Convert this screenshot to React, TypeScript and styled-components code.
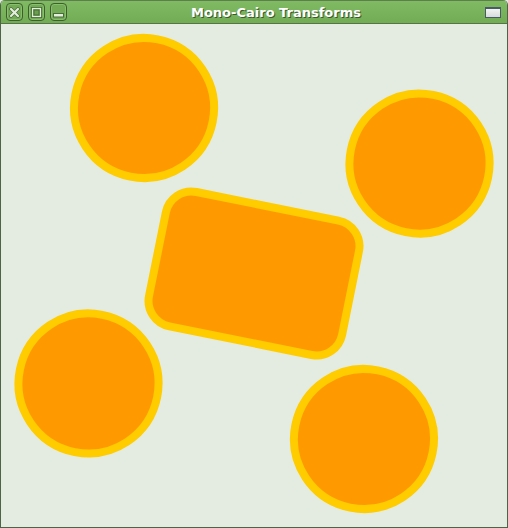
import React from 'react'
import styled, { createGlobalStyle } from 'styled-components'

const GlobalStyle = createGlobalStyle`
    html, body {
        margin: 0;
        padding: 0;
        background: #e4ece2;
    }
`

const CX = 253
const CY = 249.5
const D = 140.5
const ANGLE = 11.4

const circles = [
    { x: -D, y: -D },
    { x: D, y: -D },
    { x: -D, y: D },
    { x: D, y: D },
]

const CloseIcon = () => (
    <svg width="11" height="11" viewBox="0 0 11 11">
        <path d="M2 2 L9 9 M9 2 L2 9" stroke="#4a6b3a" strokeWidth="3.6" strokeLinecap="round" />
        <path d="M2 2 L9 9 M9 2 L2 9" stroke="#e4eedd" strokeWidth="2.2" strokeLinecap="round" />
    </svg>
)

const MaxIcon = () => (
    <svg width="11" height="11" viewBox="0 0 11 11">
        <rect x="0.5" y="0.5" width="10" height="10" fill="none" stroke="#4a6b3a" strokeWidth="1" />
        <rect x="1.5" y="1.5" width="8" height="8" fill="none" stroke="#e4eedd" strokeWidth="1.2" />
        <rect x="3" y="3" width="5" height="5" fill="#6aa04d" stroke="#4a6b3a" strokeWidth="1" />
    </svg>
)

const MinIcon = () => (
    <svg width="11" height="11" viewBox="0 0 11 11">
        <rect x="0.5" y="6.5" width="10" height="3.5" fill="#e4eedd" stroke="#4a6b3a" strokeWidth="1" />
    </svg>
)

const App: React.FunctionComponent = () => (
    <>
        <GlobalStyle />
        <Window>
            <TitleBar>
                <Buttons>
                    <TitleButton><CloseIcon /></TitleButton>
                    <TitleButton><MaxIcon /></TitleButton>
                    <TitleButton><MinIcon /></TitleButton>
                </Buttons>
                <Title>Mono-Cairo Transforms</Title>
                <ShadeBox />
            </TitleBar>
            <Client>
                <svg width="506" height="504" viewBox="0 0 506 504">
                    <g transform={`translate(${CX} ${CY}) rotate(${ANGLE})`}>
                        {circles.map((c, i) => (
                            <circle key={i} cx={c.x} cy={c.y} r="70" fill="#ff9900" stroke="#ffcc00" strokeWidth="8" />
                        ))}
                        <rect x={-98.5} y={-68.5} width="197" height="137" rx="26" ry="26" fill="#ff9900" stroke="#ffcc00" strokeWidth="8" />
                    </g>
                </svg>
            </Client>
        </Window>
    </>
)

export default App

const Window = styled.div`
    width: 508px;
    height: 528px;
    box-sizing: border-box;
    border: 1px solid #4e6446;
    border-top: none;
    border-radius: 5px 5px 0 0;
    display: flex;
    flex-direction: column;
    overflow: hidden;
    background: #e4ece2;
`

const TitleBar = styled.div`
    height: 22px;
    flex-shrink: 0;
    display: flex;
    align-items: center;
    padding: 0 6px 0 5px;
    background: linear-gradient(#80ba62, #72ac55);
    border-top: 1px solid #5d7f4d;
    border-bottom: 1px solid #557547;
`

const Buttons = styled.div`
    display: flex;
    gap: 5px;
`

const TitleButton = styled.div`
    width: 17px;
    height: 18px;
    box-sizing: border-box;
    border: 1px solid #3f5e30;
    border-radius: 4px;
    background: #72aa55;
    box-shadow: inset 0 0 0 1px #88bf6c;
    display: flex;
    align-items: center;
    justify-content: center;
`

const Title = styled.div`
    flex: 1;
    text-align: center;
    font-family: 'DejaVu Sans', sans-serif;
    font-weight: bold;
    font-size: 13px;
    color: #ffffff;
    text-shadow: 1px 1px 0 #3b5a2c;
`

const ShadeBox = styled.div`
    width: 14px;
    height: 8px;
    margin-top: 1px;
    border: 1px solid #4a5a66;
    border-top-width: 2px;
    background: linear-gradient(#f4f4f4, #d8dcdc);
`

const Client = styled.div`
    flex: 1;
    display: flex;
    background: #e4ece2;
`
